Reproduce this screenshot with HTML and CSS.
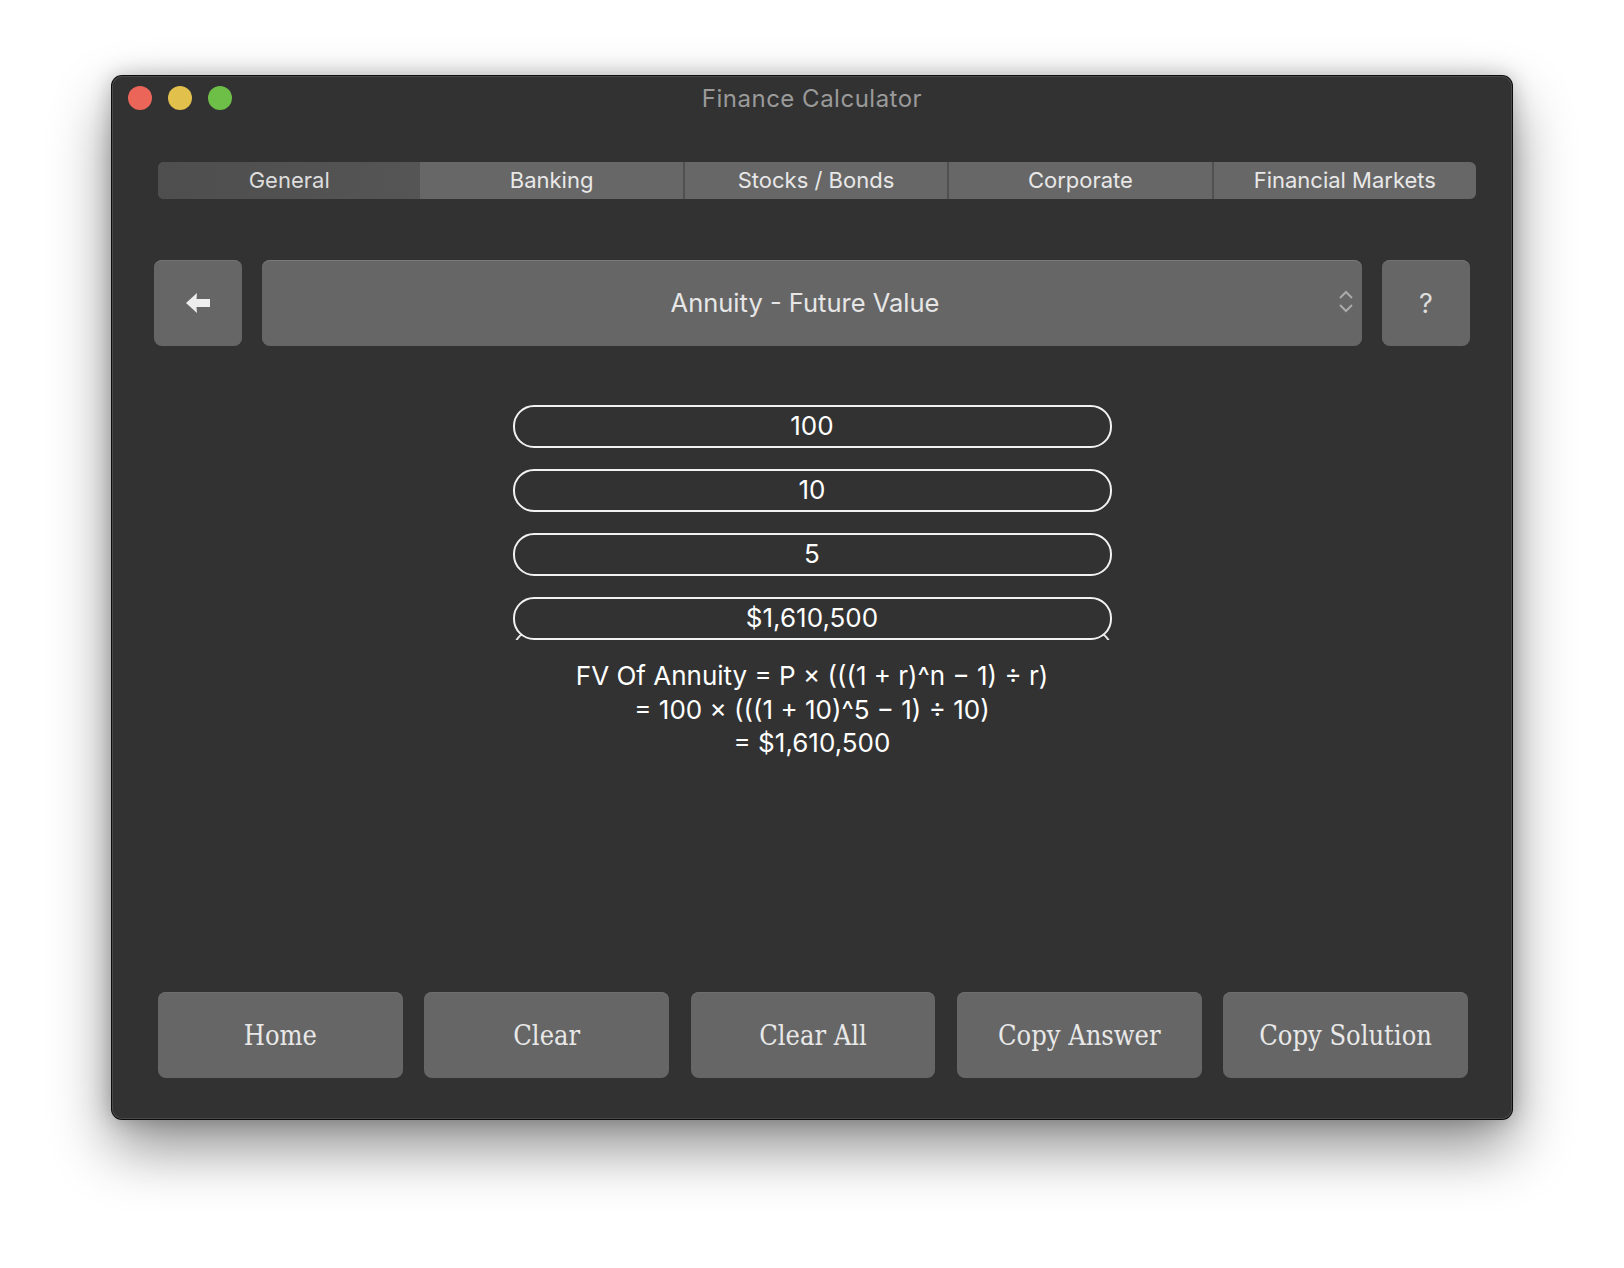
FILE: index.html
```html
<!DOCTYPE html>
<html lang="en">
<head>
<meta charset="utf-8">
<title>Finance Calculator</title>
<link rel="stylesheet" href="styles.css">
</head>
<body>
<div class="stage">
  <div class="window">
    <div class="titlebar">
      <div class="lights">
        <span class="light red"></span>
        <span class="light yellow"></span>
        <span class="light green"></span>
      </div>
      <div class="title">Finance Calculator</div>
    </div>

    <div class="tabs">
      <div class="tab selected">General</div>
      <div class="tab">Banking</div>
      <div class="tab">Stocks / Bonds</div>
      <div class="tab">Corporate</div>
      <div class="tab">Financial Markets</div>
    </div>

    <div class="toolbar">
      <button class="square-btn back" aria-label="Back">
        <svg width="24" height="20" viewBox="0 0 24 20"><path d="M0 10 L11 0 L10.5 6 L24 6 L24 14 L10.5 14 L11 20 Z" fill="#eeeeee"/></svg>
      </button>
      <div class="popup">
        <span class="popup-label">Annuity - Future Value</span>
        <svg class="chevrons" width="16" height="24" viewBox="0 0 16 24"><path d="M2 8 L8 2 L14 8" fill="none" stroke="#aaaaaa" stroke-width="2"/><path d="M2 15 L8 21 L14 15" fill="none" stroke="#aaaaaa" stroke-width="2"/></svg>
      </div>
      <button class="square-btn help">?</button>
    </div>

    <div class="fields">
      <div class="field">100</div>
      <div class="field">10</div>
      <div class="field">5</div>
      <div class="field-wrap">
        <div class="ghost"></div>
        <div class="field result">$1,610,500</div>
      </div>
    </div>

    <div class="formula">
      <div>FV Of Annuity = P × (((1 + r)^n − 1) ÷ r)</div>
      <div>= 100 × (((1 + 10)^5 − 1) ÷ 10)</div>
      <div>= $1,610,500</div>
    </div>

    <div class="actions">
      <button class="action">Home</button>
      <button class="action">Clear</button>
      <button class="action">Clear All</button>
      <button class="action">Copy Answer</button>
      <button class="action">Copy Solution</button>
    </div>
  </div>
</div>
</body>
</html>
```
FILE: styles.css
```css
* { box-sizing: border-box; }
html, body {
  margin: 0;
  padding: 0;
  background: #ffffff;
  width: 1624px;
  height: 1268px;
  overflow: hidden;
  font-family: Inter, "Noto Sans", "Liberation Sans", sans-serif;
}
.stage {
  padding: 76px 0 0 112px;
}
.window {
  width: 1400px;
  height: 1043px;
  background: #323232;
  border-radius: 10px;
  box-shadow: 0 0 0 1px #0c0c0c, inset 0 0 0 1px #4a4a4a,
              0 28px 60px rgba(0, 0, 0, 0.45), 0 0 22px rgba(0, 0, 0, 0.25);
  display: flex;
  flex-direction: column;
}
.titlebar {
  height: 44px;
  position: relative;
  display: flex;
  align-items: center;
  justify-content: center;
}
.lights {
  position: absolute;
  left: 16px;
  top: 10px;
  display: flex;
  gap: 16px;
}
.light {
  width: 24px;
  height: 24px;
  border-radius: 50%;
  display: block;
}
.red { background: #ec6559; }
.yellow { background: #e2c04c; }
.green { background: #6dbf48; }
.title {
  color: #9a9a9a;
  font-size: 24px;
  letter-spacing: 0.5px;
  margin-top: 0;
}
.tabs {
  margin: 42px 36px 0 46px;
  height: 37px;
  display: flex;
  border-radius: 6px;
  overflow: hidden;
  background: #676767;
}
.tab {
  flex: 1;
  display: flex;
  align-items: center;
  justify-content: center;
  color: #e8e8e8;
  font-size: 22px;
  padding-bottom: 2px;
  border-left: 2px solid #505050;
}
.tab:first-child { border-left: none; }
.tab.selected {
  background: linear-gradient(90deg, #4e4e4e, #555555);
  color: #dddddd;
}
.tab.selected + .tab { border-left: none; }
.toolbar {
  margin: 61px 42px 0 42px;
  height: 86px;
  display: flex;
  gap: 20px;
}
.square-btn {
  width: 88px;
  height: 86px;
  border: none;
  border-radius: 8px;
  background: #666666;
  box-shadow: inset 0 1px 0 #727272;
  display: flex;
  align-items: center;
  justify-content: center;
  padding: 0;
  font-family: inherit;
}
.help {
  color: #dddddd;
  font-size: 27px;
  font-weight: 400;
}
.popup {
  flex: 1;
  position: relative;
  background: #666666;
  border-radius: 8px;
  box-shadow: inset 0 1px 0 #7a7a7a;
  display: flex;
  align-items: center;
  justify-content: center;
  padding-bottom: 2px;
}
.popup-label {
  color: #e6e6e6;
  font-size: 25.5px;
  margin-left: -14px;
}
.chevrons {
  position: absolute;
  right: 8px;
  top: 30px;
}
.fields {
  margin-top: 59px;
  width: 599px;
  align-self: center;
  display: flex;
  flex-direction: column;
  gap: 21px;
}
.field {
  height: 43px;
  border: 2px solid #f2f2f2;
  border-radius: 21px;
  background: #323232;
  color: #ffffff;
  font-size: 26px;
  display: flex;
  align-items: center;
  justify-content: center;
  padding-bottom: 3px;
  position: relative;
  z-index: 1;
}
.field-wrap {
  position: relative;
  height: 43px;
  overflow: hidden;
}
.ghost {
  position: absolute;
  left: 0;
  right: 0;
  top: 32px;
  height: 43px;
  border: 2px solid #e8e8e8;
  border-radius: 21px;
}
.formula {
  margin-top: 19px;
  color: #ffffff;
  font-size: 26px;
  line-height: 33.5px;
  text-align: center;
}
.actions {
  margin: auto 44px 41px 46px;
  display: flex;
  gap: 21.5px;
}
.action {
  flex: 1;
  height: 86px;
  border: none;
  border-radius: 8px;
  background: #666666;
  box-shadow: inset 0 1px 0 #6e6e6e;
  color: #e8e8e8;
  font-family: "DejaVu Serif", "Liberation Serif", serif;
  font-stretch: condensed;
  font-size: 27px;
  padding: 0;
}
```
